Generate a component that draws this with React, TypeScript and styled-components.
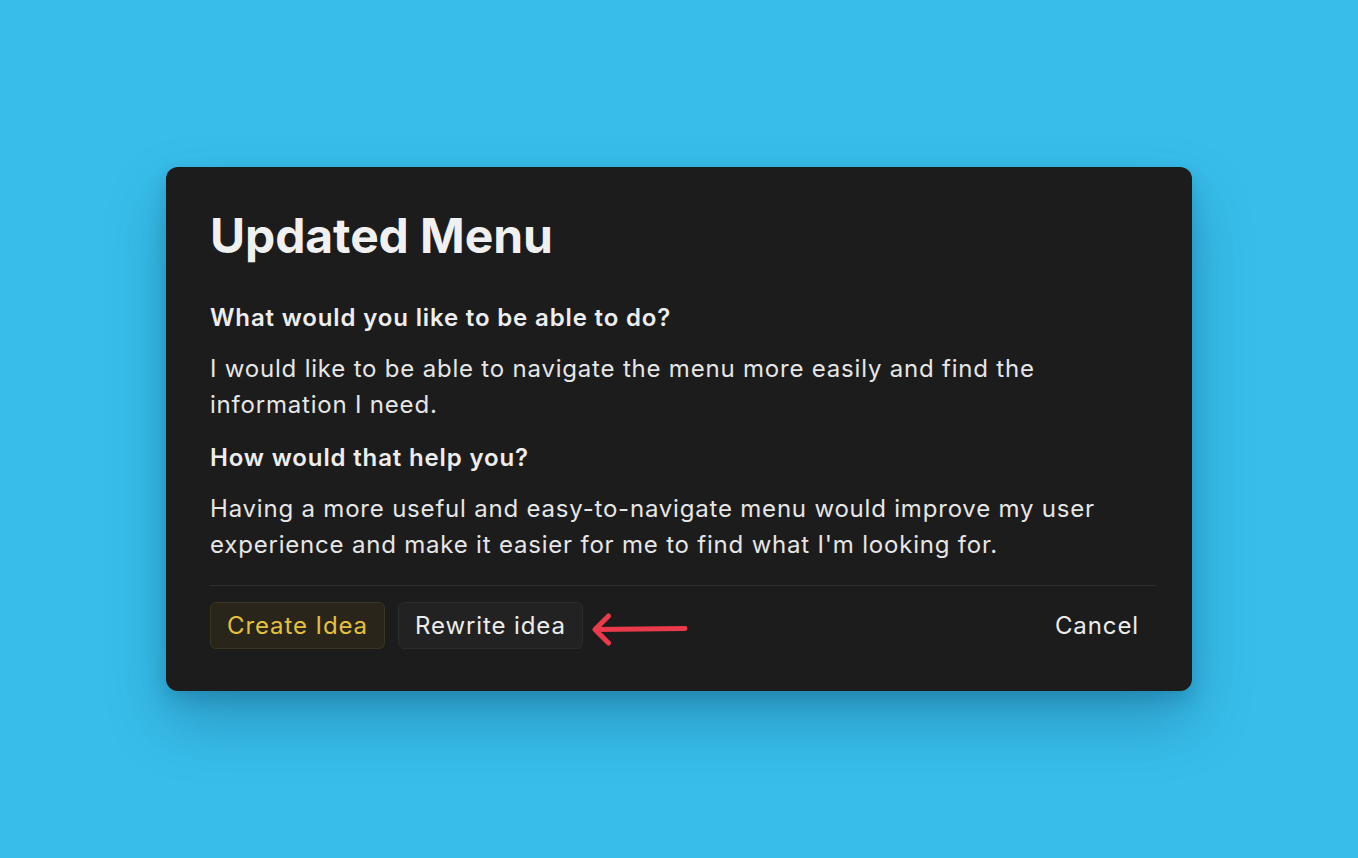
import React from "react";
import styled, { createGlobalStyle } from "styled-components";

const GlobalStyle = createGlobalStyle`
  html, body {
    margin: 0;
    padding: 0;
    background: #38bdea;
  }
  * { box-sizing: border-box; }
`;

const Page = styled.div`
  width: 100%;
  min-height: 100vh;
  display: flex;
  align-items: center;
  justify-content: center;
  background: #38bdea;
  font-family: Inter, "Noto Sans", sans-serif;
`;

const Card = styled.div`
  width: 1026px;
  background: #1c1c1c;
  border-radius: 12px;
  padding: 40px 36px 42px 44px;
  box-shadow: 0 30px 60px rgba(8, 60, 95, 0.3), 0 8px 18px rgba(8, 50, 80, 0.18);
  display: flex;
  flex-direction: column;
`;

const Title = styled.h1`
  margin: 0 0 35px;
  font-size: 48px;
  line-height: 58px;
  font-weight: 700;
  color: #f0f0f0;
  letter-spacing: -0.1px;
`;

const Question = styled.h2`
  margin: 0 0 15px;
  font-size: 24px;
  line-height: 36px;
  font-weight: 600;
  letter-spacing: 0.85px;
  color: #ededed;
`;

const Answer = styled.p<{ $last?: boolean }>`
  margin: 0 0 ${(p) => (p.$last ? "22px" : "17px")};
  font-size: 24px;
  line-height: 36px;
  font-weight: 400;
  letter-spacing: 0.8px;
  color: #e6e6e6;
`;

const Divider = styled.div`
  height: 1px;
  background: #2f2f2f;
  margin-bottom: 16px;
`;

const Footer = styled.div`
  display: flex;
  align-items: center;
  gap: 13px;
`;

const Button = styled.button<{ $variant: "primary" | "secondary" | "ghost" }>`
  font-family: Inter, "Noto Sans", sans-serif;
  font-size: 24px;
  line-height: 34px;
  font-weight: 400;
  letter-spacing: 0.9px;
  padding: 6px 16px 5px;
  border-radius: 6px;
  cursor: pointer;
  border: 1px solid
    ${(p) =>
      p.$variant === "primary" ? "#3a3522" : p.$variant === "secondary" ? "#2c2c2c" : "transparent"};
  background: ${(p) =>
    p.$variant === "primary" ? "#29251a" : p.$variant === "secondary" ? "#222222" : "transparent"};
  color: ${(p) => (p.$variant === "primary" ? "#e5c03e" : "#ececec")};
`;

const Spacer = styled.div`
  flex: 1;
`;

const ArrowIcon = styled.svg`
  display: block;
  margin-left: -5px;
`;

export default function App() {
  return (
    <>
      <GlobalStyle />
      <Page>
        <Card>
          <Title>Updated Menu</Title>
          <Question>What would you like to be able to do?</Question>
          <Answer>
            I would like to be able to navigate the menu more easily and find the information I need.
          </Answer>
          <Question>How would that help you?</Question>
          <Answer $last>
            Having a more useful and easy-to-navigate menu would improve my user experience and make it
            easier for me to find what I'm looking for.
          </Answer>
          <Divider />
          <Footer>
            <Button $variant="primary">Create Idea</Button>
            <Button $variant="secondary">Rewrite idea</Button>
            <ArrowIcon width="100" height="40" viewBox="0 0 100 40" fill="none">
              <path
                d="M4 23.5 L94 22.5 M4 23.5 L17.5 10 M4 23.5 L17.5 37"
                stroke="#ea3a4c"
                strokeWidth="5"
                strokeLinecap="round"
                strokeLinejoin="round"
              />
            </ArrowIcon>
            <Spacer />
            <Button $variant="ghost">Cancel</Button>
          </Footer>
        </Card>
      </Page>
    </>
  );
}
